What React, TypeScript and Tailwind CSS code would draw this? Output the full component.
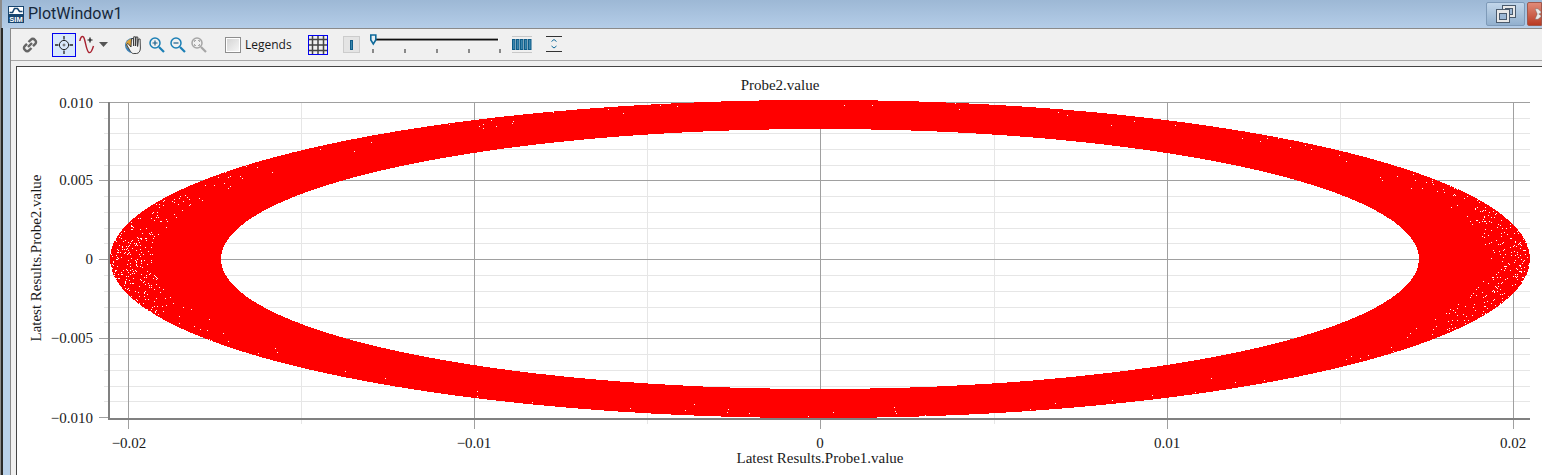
const serif = { fontFamily: '"Liberation Serif", serif' };

// seeded so the noise in the plot stays the same between runs
function makeSpecks() {
  let seed = 12345;
  const rnd = () => {
    seed = (seed * 1664525 + 1013904223) % 4294967296;
    return seed / 4294967296;
  };
  const specks: { x: number; y: number }[] = [];
  let guard = 0;
  while (specks.length < 620 && guard < 400000) {
    guard++;
    const a = rnd() * Math.PI * 2;
    const r = 0.84 + rnd() * 0.16;
    const x = 820 + Math.cos(a) * 710 * r;
    const y = 259 + Math.sin(a) * 159 * r;
    const inner = ((x - 820) / 598) ** 2 + ((y - 259) / 130) ** 2;
    if (inner < 1.25) continue;
    const side = Math.abs(x - 820) / 710;
    // dense at the two ends, thin along the outer edge of the band
    const edge = r > 0.96 ? 0.012 : 0.0015;
    if (rnd() > side ** 14 * 0.35 + edge) continue;
    specks.push({ x: Math.round(x), y: Math.round(y) });
  }
  return specks;
}

const specks = makeSpecks();
const hMinor = [118, 133, 149, 165, 196, 212, 228, 243, 275, 291, 307, 322, 354, 370, 386, 401];
const hMajor = [102, 180, 259, 338];
const vMinor = [301, 647, 994, 1340];
const vMajor = [128, 474, 820, 1167, 1513];

function Chart() {
  return (
    <svg width="1525" height="408" viewBox="17 67 1525 408" className="block" style={serif}>
      <g shapeRendering="crispEdges">
        {hMinor.map((y) => (
          <line key={y} x1="104" x2="1530" y1={y + 0.5} y2={y + 0.5} stroke="#e6e6e6" />
        ))}
        {vMinor.map((x) => (
          <line key={x} x1={x + 0.5} x2={x + 0.5} y1="102" y2="424" stroke="#e6e6e6" />
        ))}
        {hMajor.map((y) => (
          <line key={y} x1="99" x2="1530" y1={y + 0.5} y2={y + 0.5} stroke="#a0a0a0" />
        ))}
        <line x1="99" x2="109" y1="417.5" y2="417.5" stroke="#a0a0a0" />
        {vMajor.map((x) => (
          <line key={x} x1={x + 0.5} x2={x + 0.5} y1="102" y2="429" stroke="#a0a0a0" />
        ))}
        <path
          fillRule="evenodd"
          fill="#ff0000"
          d="M110 259a710 159 0 1 0 1420 0a710 159 0 1 0 -1420 0ZM221 259a599 130 0 1 0 1198 0a599 130 0 1 0 -1198 0Z"
        />
        {specks.map((s, i) => (
          <rect key={i} x={s.x} y={s.y} width="1" height="1" fill="#ffffff" />
        ))}
        <rect x="108" y="102" width="2" height="318" fill="#808080" />
        <rect x="108" y="418" width="1422" height="2" fill="#808080" />
      </g>
      <g fontSize="15" fill="#1a1a1a">
        <text x="780" y="90" textAnchor="middle">Probe2.value</text>
        <text x="93" y="108" textAnchor="end">0.010</text>
        <text x="93" y="185" textAnchor="end">0.005</text>
        <text x="93" y="264" textAnchor="end">0</text>
        <text x="93" y="343" textAnchor="end">−0.005</text>
        <text x="93" y="423" textAnchor="end">−0.010</text>
        <text x="129" y="448" textAnchor="middle">−0.02</text>
        <text x="474" y="448" textAnchor="middle">−0.01</text>
        <text x="820" y="448" textAnchor="middle">0</text>
        <text x="1167" y="448" textAnchor="middle">0.01</text>
        <text x="1513" y="448" textAnchor="middle">0.02</text>
        <text x="820" y="463" textAnchor="middle">Latest Results.Probe1.value</text>
        <text x="0" y="0" textAnchor="middle" transform="translate(41 258) rotate(-90)">Latest Results.Probe2.value</text>
      </g>
    </svg>
  );
}

function SimLogo() {
  return (
    <svg width="16" height="17" viewBox="0 0 16 17" className="mr-[4px]">
      <rect width="16" height="17" fill="#17456f" />
      <rect x="1" y="1" width="14" height="7" fill="#ffffff" />
      <path d="M1.500 6.500h3l2-4h3l2 3h3" fill="none" stroke="#17456f" strokeWidth="1.600" />
      <text x="8" y="15.500" textAnchor="middle" fontSize="7.500" fontWeight="700" fill="#ffffff" style={{ fontFamily: '"Liberation Sans", sans-serif' }}>SIM</text>
    </svg>
  );
}

function Toolbar() {
  return (
    <div className="flex h-[33px] shrink-0 items-center border-t border-b border-t-[#8a8a8a] border-b-[#a8a8a8] bg-[#f0f0f0]">
      {/* link */}
      <svg width="16" height="16" viewBox="0 0 16 16" className="ml-[11px]" fill="none" stroke="#666666" strokeWidth="2.400">
        <path d="M6.500 5 9 2.600a2.400 2.400 0 0 1 3.600 0l.7.7a2.400 2.400 0 0 1 0 3.500L11 9.200" />
        <path d="M9.500 11 7 13.400a2.400 2.400 0 0 1-3.600 0l-.7-.7a2.400 2.400 0 0 1 0-3.500L5 6.800" />
        <path d="M6 10l4-4" />
      </svg>
      {/* crosshair, selected */}
      <div className="ml-[14px] flex h-[24px] w-[24px] items-center justify-center border border-[#0000f0] bg-[#d9e8fb]">
        <svg width="20" height="20" viewBox="0 0 20 20" fill="none" stroke="#222222">
          <circle cx="10" cy="10" r="4.600" />
          <circle cx="10" cy="10" r="1" fill="#777777" stroke="#777777" />
          <path d="M10 1v3.500M10 15.500V19M1 10h3.500M15.500 10H19" strokeWidth="1.300" />
        </svg>
      </div>
      {/* curve with plus */}
      <svg width="16" height="20" viewBox="0 0 16 20" className="ml-[3px]" fill="none">
        <path d="M0.800 6C1.500 2 3 0.500 4.500 2 6.500 4.500 7 16 10 17.500 12 18.500 13.500 14 14.500 11" stroke="#a8202e" strokeWidth="1.400" />
        <path d="M8.500 5h5M11 2.500v5" stroke="#111111" strokeWidth="1.200" />
      </svg>
      <svg width="9" height="5" viewBox="0 0 9 5" className="ml-[4px]">
        <path d="M0 0h9L4.500 5Z" fill="#555555" />
      </svg>
      {/* hand */}
      <svg width="19" height="20" viewBox="0 0 19 20" className="ml-[17px]">
        <circle cx="7.500" cy="10.500" r="7.500" fill="#3f83b8" />
        <path d="M1 8c2-4 6-5 7-3l-1 5-5 3Z" fill="#dca23c" />
        <path d="M4 14 1.500 9.500 3 8.500l3 3.500.5-8.500h1.800L8.700 11V1.800h1.900V11l.4-9h1.800l-.2 9.500.8-7.500h1.700l.3 9c0 3-1.500 5.500-4 5.500H9C7 19 5.500 16.500 4 14Z" fill="#f2f2f2" stroke="#333333" strokeWidth="0.900" />
      </svg>
      {/* zoom in */}
      <svg width="16" height="16" viewBox="0 0 16 16" className="ml-[5px]" fill="none" stroke="#1b7fb5">
        <circle cx="6" cy="6" r="5" strokeWidth="1.500" />
        <path d="M10 10l5 5" strokeWidth="2.200" />
        <path d="M3.500 6h5M6 3.500v5" strokeWidth="1.200" stroke="#1a5f8a" />
      </svg>
      {/* zoom out */}
      <svg width="16" height="16" viewBox="0 0 16 16" className="ml-[5px]" fill="none" stroke="#1b7fb5">
        <circle cx="6" cy="6" r="5" strokeWidth="1.500" />
        <path d="M10 10l5 5" strokeWidth="2.200" />
        <path d="M3.500 6h5" strokeWidth="1.200" stroke="#1a5f8a" />
      </svg>
      {/* zoom fit, disabled */}
      <svg width="16" height="16" viewBox="0 0 16 16" className="ml-[5px]" fill="none" stroke="#a6a6a6">
        <circle cx="6" cy="6" r="5" strokeWidth="1.500" />
        <path d="M10 10l5 5" strokeWidth="2.200" />
        <path d="M3.500 5V3.500H5M7 3.500h1.500V5M8.500 7v1.500H7M5 8.500H3.500V7" />
      </svg>
      {/* legends */}
      <div className="ml-[18px] h-[16px] w-[16px] border border-[#8e8e8e] bg-gradient-to-br from-[#d2d2d2] to-[#f8f8f8] shadow-[inset_0_0_0_1px_#ffffff]" />
      <span className="ml-[4px] text-[12px] text-[#1a1a1a]" style={{ fontFamily: '"Open Sans", sans-serif' }}>Legends</span>
      {/* grid toggle */}
      <div className="ml-[16px] flex h-[20px] w-[20px] items-center justify-center border border-[#0000f0]">
        <svg width="18" height="18" viewBox="0 0 18 18" fill="none" stroke="#444444" strokeWidth="1.500">
          <path d="M0 3.500h18M0 9h18M0 14.500h18M3.500 0v18M9 0v18M14.500 0v18" />
        </svg>
      </div>
      {/* slider block */}
      <div className="ml-[15px] flex h-[17px] w-[17px] items-center justify-center border border-[#cccccc] bg-[#e4e4e4]">
        <div className="h-[10px] w-[3px] border border-[#0f5c88] bg-[#3a86ad]" />
      </div>
      <svg width="132" height="22" viewBox="0 0 132 22" className="ml-[10px]">
        <rect x="4" y="4" width="125" height="3" fill="#fafafa" />
        <rect x="4" y="4" width="124" height="1" fill="#a0a0a0" />
        <rect x="4" y="5" width="124" height="1.500" fill="#111111" />
        <path d="M0.800 1h5v5l-2.500 4-2.500-4Z" fill="#e8f0f4" stroke="#0f6a9a" strokeWidth="1.600" />
        <path d="M3 15v4M35 15v4M67 15v4M99 15v4M130 15v4" stroke="#222222" />
      </svg>
      <svg width="20" height="17" viewBox="0 0 20 17" className="ml-[10px]">
        <path d="M0 0.500h20M0 16.500h20" stroke="#c8c8c8" />
        {[0, 4, 8, 12, 16].map((x) => (
          <rect key={x} x={x + 0.5} y="3.500" width="2.500" height="10" fill="#3a86ad" stroke="#0f5c88" />
        ))}
      </svg>
      <svg width="16" height="17" viewBox="0 0 16 17" className="ml-[14px]" fill="none">
        <path d="M0 0.500h16M0 15.500h16" stroke="#333333" />
        <path d="M5.500 5.500 8 3.500l2.500 2M5.500 10 8 12l2.500-2" stroke="#0f6a9a" />
      </svg>
    </div>
  );
}

export default function App() {
  return (
    <div className="flex h-[475px] w-[1542px] flex-col overflow-hidden bg-[#b9d1ea]">
      <div className="flex h-[28px] shrink-0 items-center border-l-2 border-[#8c8c8c] bg-gradient-to-b from-[#9db8d5] to-[#b4cde8] pl-[6px]">
        <SimLogo />
        <span className="text-[16px] leading-none text-[#16283a]" style={{ fontFamily: 'Roboto, sans-serif' }}>PlotWindow1</span>
        <div className="ml-auto flex h-[24px] items-start">
          <div className="flex h-[24px] w-[39px] items-center justify-center rounded-[2px] border border-[#7e9ab8] bg-gradient-to-b from-[#c2d6ea] to-[#92b0ce]">
            <svg width="20" height="18" viewBox="0 0 20 18" fill="#e8e8e8" stroke="#4a5a6c">
              <rect x="6.500" y="0.500" width="13" height="12" />
              <rect x="9.500" y="3.500" width="7" height="6" fill="#9db8d5" />
              <rect x="0.500" y="4.500" width="13" height="13" />
              <rect x="3.500" y="8.500" width="7" height="6" fill="#9db8d5" />
            </svg>
          </div>
          <div className="ml-[2px] flex h-[24px] w-[15px] items-center overflow-hidden rounded-l-[2px] border border-[#a0584c] bg-gradient-to-b from-[#e08a78] to-[#b93a22] pl-[7px]">
            <svg width="8" height="14" viewBox="0 0 8 14">
              <path d="M0 0h4l4 4v1.500L5 7l3 2v1.500L4 14H0l3-7Z" fill="#e9e9e9" stroke="#555555" strokeWidth="0.5" />
            </svg>
          </div>
        </div>
      </div>
      <div className="flex min-h-0 flex-1">
        <div className="flex w-[10px] shrink-0">
          <div className="w-px bg-[#8c8c8c]" />
          <div className="w-[2px] bg-[#2a2a2a]" />
          <div className="flex-1 bg-[#b9d1ea]" />
        </div>
        <div className="flex min-w-0 flex-1 flex-col border-l border-[#8a8a8a]">
          <Toolbar />
          <div className="flex-1 bg-[#f0f0f0] pt-[5px] pl-[5px]">
            <div className="h-full border-t border-l border-[#444444] bg-white">
              <Chart />
            </div>
          </div>
        </div>
      </div>
    </div>
  );
}
